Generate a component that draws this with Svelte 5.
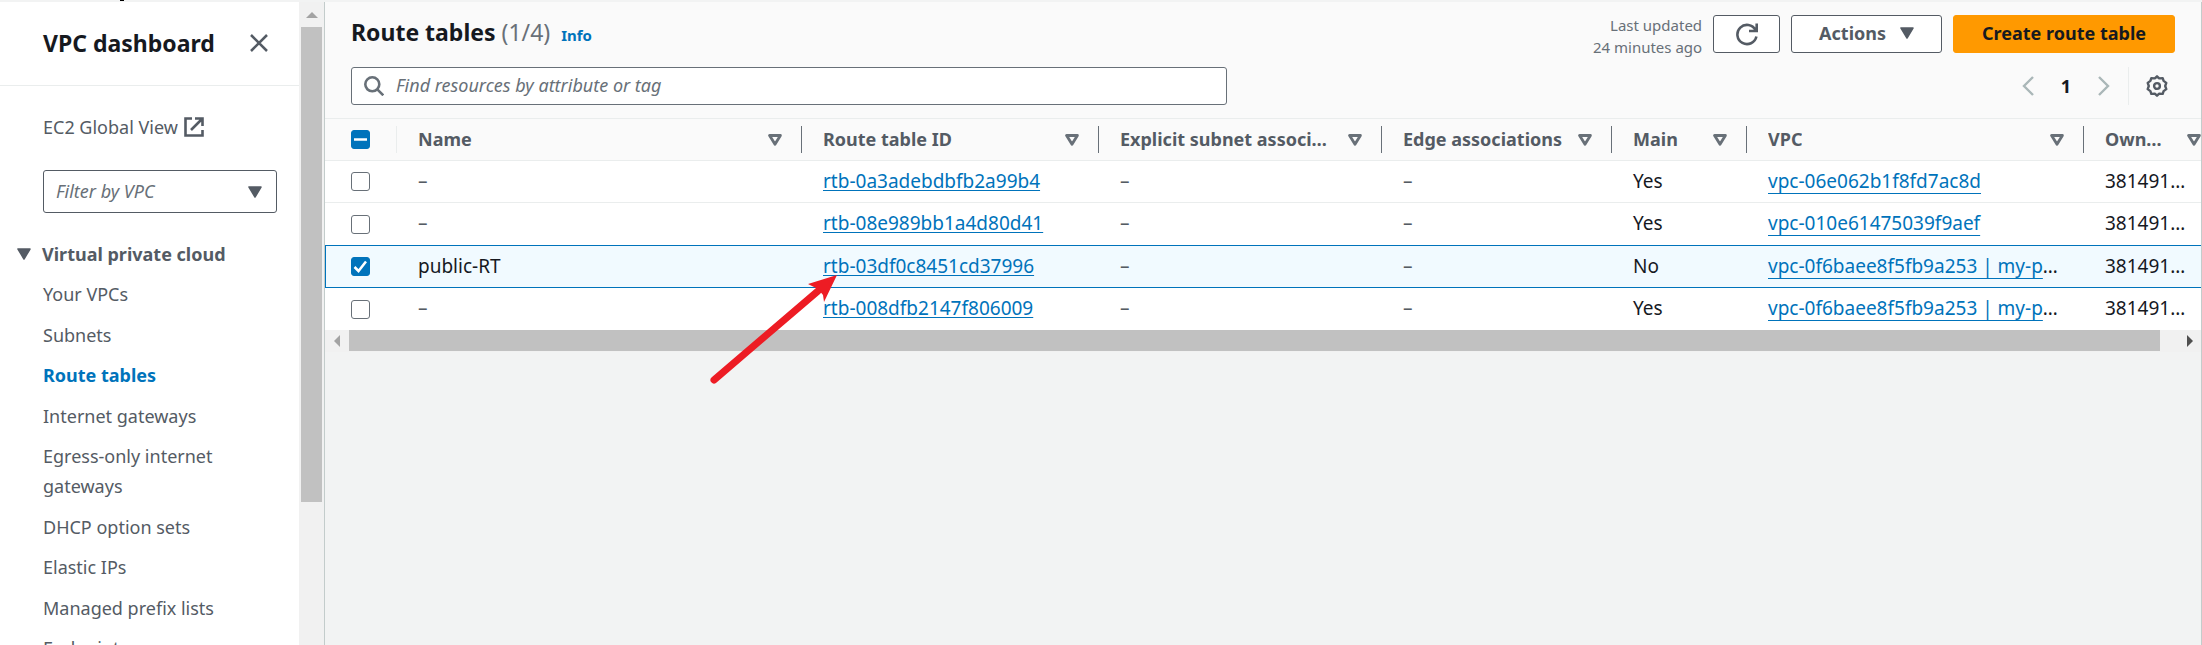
<script>
  const nav = [
    'Your VPCs', 'Subnets', 'Route tables', 'Internet gateways',
    'Egress-only internet gateways', 'DHCP option sets', 'Elastic IPs',
    'Managed prefix lists', 'Endpoints'
  ];
  const active = 'Route tables';

  const columns = [
    { key: 'name', label: 'Name' },
    { key: 'id', label: 'Route table ID' },
    { key: 'subnets', label: 'Explicit subnet associations' },
    { key: 'edge', label: 'Edge associations' },
    { key: 'main', label: 'Main' },
    { key: 'vpc', label: 'VPC' },
    { key: 'owner', label: 'Owner ID' }
  ];

  let rows = $state([
    { name: '–', id: 'rtb-0a3adebdbfb2a99b4', main: 'Yes', vpc: 'vpc-06e062b1f8fd7ac8d', owner: '381491000000', selected: false },
    { name: '–', id: 'rtb-08e989bb1a4d80d41', main: 'Yes', vpc: 'vpc-010e61475039f9aef', owner: '381491000000', selected: false },
    { name: 'public-RT', id: 'rtb-03df0c8451cd37996', main: 'No', vpc: 'vpc-0f6baee8f5fb9a253 | my-p', more: true, owner: '381491000000', selected: true },
    { name: '–', id: 'rtb-008dfb2147f806009', main: 'Yes', vpc: 'vpc-0f6baee8f5fb9a253 | my-p', more: true, owner: '381491000000', selected: false }
  ]);

  let count = $derived(rows.filter((r) => r.selected).length);
  let partial = $derived(count > 0 && count < rows.length);

  function toggleAll(e) {
    const on = e.currentTarget.checked;
    rows.forEach((r) => (r.selected = on));
  }
</script>

<div class="page">
  <aside>
    <div class="side">
      <header class="side-head">
        <h2>VPC dashboard</h2>
        <button class="plain" aria-label="Close navigation">
          <svg width="20" height="20" viewBox="0 0 20 20" fill="none" stroke="#545b64" stroke-width="2.5"><path d="M2 2l16 16M18 2L2 18" /></svg>
        </button>
      </header>
      <a class="global" href="#global">EC2 Global View
        <svg width="20" height="20" viewBox="0 0 20 20" fill="none" stroke="#545b64" stroke-width="2.6"><path d="M8 1.5H1.5v17h17V13M11 1.5h7.5V9M18 2L7 13" /></svg>
      </a>
      <div class="filter">
        <select aria-label="Filter by VPC"><option>Filter by VPC</option></select>
        <svg width="14" height="12" viewBox="0 0 14 12"><path d="M1 1h12L7 11z" fill="#545b64" stroke="#545b64" stroke-width="1.5" stroke-linejoin="round" /></svg>
      </div>
      <nav>
        <button class="group" aria-expanded="true">
          <svg width="14" height="12" viewBox="0 0 14 12"><path d="M1 1h12L7 11z" fill="#545b64" stroke="#545b64" stroke-width="1.5" stroke-linejoin="round" /></svg>
          Virtual private cloud
        </button>
        <ul>
          {#each nav as item}
            <li><a href="#nav" class:active={item === active}>{item}</a></li>
          {/each}
        </ul>
      </nav>
    </div>
    <div class="vbar">
      <svg width="12" height="6" viewBox="0 0 12 6"><path d="M0 6l6-6 6 6z" fill="#a3a3a3" /></svg>
      <div class="vthumb"></div>
    </div>
  </aside>

  <main>
    <header class="head">
      <div class="row top">
        <h1>Route tables <span>({count}/{rows.length})</span></h1>
        <a class="info" href="#info">Info</a>
        <p class="updated">Last updated<br />24 minutes ago</p>
        <button class="btn refresh" aria-label="Refresh">
          <svg width="24" height="24" viewBox="0 0 24 24" fill="none" stroke="#545b64" stroke-width="2.6"><path d="M21.4 14.5A9.600 9.600 0 1 1 20.500 8M21.7 1.500V9H14" /></svg>
        </button>
        <button class="btn actions">Actions
          <svg width="14" height="12" viewBox="0 0 14 12"><path d="M1 1h12L7 11z" fill="#545b64" stroke="#545b64" stroke-width="1.5" stroke-linejoin="round" /></svg>
        </button>
        <button class="btn primary">Create route table</button>
      </div>
      <div class="row tools">
        <label class="search">
          <svg width="20" height="20" viewBox="0 0 20 20" fill="none" stroke="#687078" stroke-width="2.6"><circle cx="8.3" cy="8.3" r="7" /><path d="M13.3 13.3l6 6" /></svg>
          <input type="text" aria-label="Find resources" placeholder="Find resources by attribute or tag" />
        </label>
        <div class="pager">
          <button class="plain" aria-label="Previous page"><svg width="12" height="20" viewBox="0 0 12 20" fill="none" stroke="#aab7b8" stroke-width="2.4"><path d="M11 1L2 10l9 9" /></svg></button>
          <button class="plain current">1</button>
          <button class="plain" aria-label="Next page"><svg width="12" height="20" viewBox="0 0 12 20" fill="none" stroke="#aab7b8" stroke-width="2.4"><path d="M1 1l9 9-9 9" /></svg></button>
        </div>
        <div class="prefs">
          <button class="plain" aria-label="Preferences">
            <svg width="22" height="22" viewBox="0 0 22 22" fill="none" stroke="#545b64" stroke-width="2.4" stroke-linejoin="round"><path d="M11 1.300L13.200 3.400 16.700 3.100 17.600 5.900 20.300 7.900 19.200 11 20.300 14.100 17.600 16.100 16.700 18.900 13.200 18.600 11 20.700 8.800 18.600 5.300 18.900 4.400 16.100 1.700 14.100 2.800 11 1.700 7.900 4.400 5.900 5.300 3.100 8.800 3.400z" /><circle cx="11" cy="11" r="2.900" /></svg>
          </button>
        </div>
      </div>
    </header>

    <div class="scroller">
      <table>
        <colgroup>
          <col class="c-check" /><col /><col class="c-id" /><col class="c-subnets" />
          <col class="c-edge" /><col class="c-main" /><col class="c-vpc" /><col class="c-owner" />
        </colgroup>
        <thead>
          <tr>
            <th class="check"><div class="cell"><input type="checkbox" aria-label="Select all" indeterminate={partial} checked={count === rows.length} onchange={toggleAll} /></div></th>
            {#each columns as c}
              <th scope="col"><div class="cell"><span>{c.label}</span>
                <svg width="14" height="12" viewBox="0 0 14 12" fill="none" stroke="#687078" stroke-width="2.8" stroke-linejoin="round"><path d="M1.600 1.500h10.800L7 10.200z" /></svg>
              </div></th>
            {/each}
          </tr>
        </thead>
        <tbody>
          {#each rows as r}
            <tr class:selected={r.selected}>
              <td class="check"><input type="checkbox" aria-label={'Select ' + r.id} bind:checked={r.selected} /></td>
              <td class:dash={r.name === '–'}>{r.name}</td>
              <td><a class="id" href="#rtb">{r.id}</a></td>
              <td class="dash">–</td>
              <td class="dash">–</td>
              <td>{r.main}</td>
              <td><a class="vpc" href="#vpc">{r.vpc}</a>{r.more ? '…' : ''}</td>
              <td class="owner">{r.owner}</td>
            </tr>
          {/each}
        </tbody>
      </table>
    </div>
    <div class="hbar">
      <svg width="6" height="12" viewBox="0 0 6 12"><path d="M6 0L0 6l6 6z" fill="#a3a3a3" /></svg>
      <div class="htrack"><div class="hthumb"></div></div>
      <svg width="6" height="12" viewBox="0 0 6 12"><path d="M0 0l6 6-6 6z" fill="#505050" /></svg>
    </div>
  </main>

  <svg class="pointer" width="130" height="116" viewBox="0 0 130 116"><path d="M4 110L108 21" stroke="#ed1c24" stroke-width="7" stroke-linecap="round" /><path d="M127 5L98 14l10 5 5 6 1 7z" fill="#ed1c24" /></svg>
</div>

<style>
  :global(body) { background: #f2f3f3; }
  * { box-sizing: border-box; }
  .page {
    position: relative;
    display: flex;
    height: 100vh;
    padding-top: 2px;
    overflow: hidden;
    font-family: "Noto Sans", sans-serif;
    font-size: 18px;
    line-height: 30px;
    color: #16191f;
    background: #f2f3f3;
  }
  .page::before { content: ""; position: absolute; left: 120px; top: 0; width: 4px; height: 1px; background: #000; }
  h1, h2, p, ul { margin: 0; padding: 0; }
  ul { list-style: none; }
  a { color: #0073bb; text-decoration: none; }
  button, input, select { font: inherit; color: inherit; margin: 0; }
  svg { display: block; flex: none; }
  .plain { display: flex; align-items: center; justify-content: center; padding: 0; border: 0; background: none; }

  aside { display: flex; flex: none; width: 325px; background: #fff; border-right: 1px solid #c3cccb; }
  .side { flex: 1; min-width: 0; }
  .side-head { display: flex; align-items: center; justify-content: space-between; height: 84px; padding: 0 30px 2px 43px; border-bottom: 1px solid #eaeded; }
  h2 { font-size: 23px; font-weight: 700; }
  .global { display: flex; align-items: center; gap: 6px; margin: 26px 0 0 43px; color: #545b64; }
  .filter { position: relative; margin: 28px 22px 0 43px; }
  .filter select { display: block; width: 100%; height: 43px; padding: 0 12px 2px; appearance: none; border: 1px solid #545b64; border-radius: 3px; background: #fff; color: #687078; font-style: italic; }
  .filter svg { position: absolute; right: 15px; top: 16px; pointer-events: none; }
  nav { padding: 26px 20px 0 17px; }
  .group { display: flex; align-items: center; gap: 11px; padding: 0; border: 0; background: none; color: #545b64; font-weight: 700; }
  nav ul { display: flex; flex-direction: column; gap: 10px; padding: 10px 30px 0 26px; }
  nav li:nth-child(even) { padding-top: 1px; }
  nav li a { display: block; color: #545b64; }
  nav li a.active { color: #0073bb; font-weight: 700; }
  .vbar { width: 25px; padding: 10px 2px 0; background: #f1f1f1; }
  .vbar svg { margin: 0 auto 9px; }
  .vthumb { height: 75%; background: #c1c1c1; }

  main { flex: 1; min-width: 0; border-right: 1px solid #c3cccb; }
  .head { padding: 13px 26px 13px 26px; background: #fafafa; border-bottom: 1px solid #eaeded; }
  .row { display: flex; align-items: center; }
  .top { height: 38px; }
  h1 { padding-bottom: 4px; font-size: 23px; font-weight: 700; }
  h1 span { color: #687078; font-weight: 400; }
  .info { margin: 2px auto 0 11px; font-size: 15px; font-weight: 700; }
  .updated { margin-top: 4px; padding-right: 11px; color: #687078; font-size: 15px; line-height: 22px; text-align: right; }
  .btn { display: flex; align-items: center; justify-content: center; gap: 14px; height: 38px; padding: 0 27px 2px; border: 1px solid #545b64; border-radius: 3px; background: #fff; color: #545b64; font-weight: 700; }
  .refresh { width: 67px; padding: 0; }
  .actions, .primary { margin-left: 11px; }
  .primary { padding: 0 28px 2px; border-color: #ff9900; background: #ff9900; color: #16191f; }
  .tools { margin-top: 14px; }
  .search { display: flex; align-items: center; gap: 12px; width: 48%; height: 38px; margin-right: auto; padding: 0 12px; border: 1px solid #687078; border-radius: 3px; background: #fff; }
  .search input { flex: 1; min-width: 0; padding: 0 0 2px; border: 0; outline: 0; background: none; }
  .search input::placeholder { color: #687078; font-style: italic; opacity: 1; }
  .pager { display: flex; align-items: center; gap: 22px; padding-right: 18px; }
  .current { width: 20px; font-weight: 700; }
  .prefs { display: flex; align-items: center; height: 38px; padding: 0 7px 0 17px; border-left: 1px solid #eaeded; }

  .scroller { overflow: hidden; background: #fff; }
  table { width: calc(100% + 20px); table-layout: fixed; border-collapse: separate; border-spacing: 0; }
  .c-check { width: 72px; }
  .c-id { width: 297px; }
  .c-subnets { width: 283px; }
  .c-edge { width: 230px; }
  .c-main { width: 135px; }
  .c-vpc { width: 337px; }
  .c-owner { width: 137px; }
  th { height: 42px; padding: 0; background: #fafafa; border-bottom: 1px solid #eaeded; color: #545b64; font-weight: 700; text-align: left; }
  .cell { display: flex; align-items: center; justify-content: space-between; gap: 12px; height: 27px; padding: 0 19px 0 21px; border-right: 1px solid #687078; }
  .cell span { padding-bottom: 2px; overflow: hidden; text-overflow: ellipsis; white-space: nowrap; }
  th:last-child .cell { gap: 20px; }
  .check .cell { padding-left: 26px; border-color: #eaeded; }
  td { height: 42px; padding: 0 21px 2px; border-bottom: 1px solid #eaeded; overflow: hidden; font-size: 19px; white-space: nowrap; }
  td.check { padding: 0 0 0 26px; }
  td.owner { padding-right: 26px; text-overflow: ellipsis; }
  .dash { color: #545b64; }
  tr:has(+ .selected) td, tr:last-child td { border-bottom: 0; }
  .selected td { height: 43px; background: #f1faff; border-top: 1px solid #0073bb; border-bottom: 1px solid #0073bb; }
  .selected td:first-child { border-left: 1px solid #0073bb; padding-left: 25px; }
  .id { text-decoration: underline; text-underline-offset: 2px; text-decoration-thickness: 1px; }
  .vpc { text-decoration: underline; text-underline-offset: 5px; text-decoration-thickness: 1px; text-decoration-skip-ink: none; }
  input[type="checkbox"] { display: block; width: 19px; height: 19px; appearance: none; border: 1px solid #687078; border-radius: 3px; background: #fff center / 19px 19px no-repeat; }
  input[type="checkbox"]:checked { border-color: #0073bb; background-color: #0073bb; background-image: url("data:image/svg+xml,%3Csvg xmlns='http://www.w3.org/2000/svg' viewBox='0 0 19 19'%3E%3Cpath d='M3.500 10l4 4L15 4.500' fill='none' stroke='white' stroke-width='2.500'/%3E%3C/svg%3E"); }
  input[type="checkbox"]:indeterminate { border-color: #0073bb; background-color: #0073bb; background-image: url("data:image/svg+xml,%3Csvg xmlns='http://www.w3.org/2000/svg' viewBox='0 0 19 19'%3E%3Cpath d='M3 9.500h13' stroke='white' stroke-width='2.500'/%3E%3C/svg%3E"); }

  .hbar { display: flex; align-items: center; gap: 9px; height: 22px; padding: 0 8px 0 9px; background: #f1f1f1; }
  .htrack { flex: 1; height: 100%; padding-bottom: 1px; }
  .hthumb { width: 99%; height: 100%; background: #c1c1c1; }
  .pointer { position: absolute; left: 710px; top: 270px; pointer-events: none; }
</style>
